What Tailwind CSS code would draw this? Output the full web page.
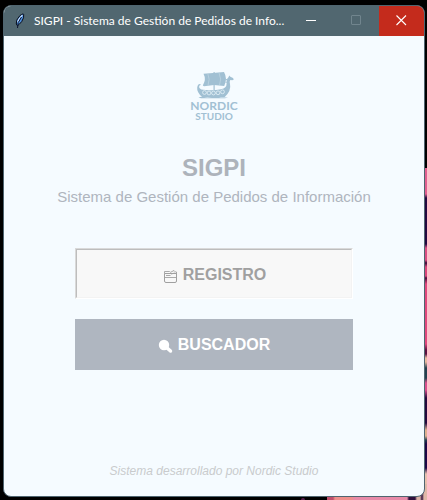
<!DOCTYPE html>
<html lang="es">
<head>
<meta charset="utf-8">
<meta name="viewport" content="width=device-width, initial-scale=1">
<title>SIGPI - Sistema de Gestión de Pedidos de Información</title>
<script src="https://cdn.jsdelivr.net/npm/@tailwindcss/browser@4"></script>
</head>
<body class="relative flex min-h-screen overflow-hidden bg-black pt-[5px] pr-[2px] pb-[3px] pl-[3px] font-['Liberation_Sans',Arial,sans-serif]">
<!-- Desktop wallpaper showing past the window's edges -->
<div aria-hidden="true" class="absolute right-0 bottom-0 h-[332px] w-4 bg-[linear-gradient(to_bottom,#e0608f_0_26px,#22083f_30px_76px,#d94f82_80px_92px,#3a0838_95px,#d9477a_99px_108px,#4a0a3c_110px,#e0487c_116px_176px,#5a1040_182px_186px,#e8b9a0_190px_194px,#24404f_200px_210px,#d9508c_215px_222px,#24083c_230px_255px,#e0b090_262px_268px,#24404f_272px,#1c0645_276px_300px,#e8bfae_306px_332px)]"></div>
<div aria-hidden="true" class="absolute right-0 bottom-0 h-4 w-[100px] bg-[linear-gradient(to_right,#c0506c_0_6px,#ee8f8c_8px_24px,#e78aa8_28px_80px,#30103c_82px_88px,#d9b0a4_90px_93px,#30103c_95px,#e0b8a8_97px)]"></div>
<div aria-hidden="true" class="absolute right-[122px] bottom-0 h-[2px] w-1 rounded-t bg-[#5a1f50]"></div>

<div class="relative flex min-w-0 flex-1 flex-col overflow-hidden rounded-lg border border-[#4f6570] bg-[#f5fbff]">
  <header class="flex h-[30px] shrink-0 items-stretch bg-[#516770] text-white">
    <div class="flex min-w-0 flex-1 items-center gap-1.5 pl-2">
      <svg class="h-4 w-4 shrink-0" viewBox="0 0 16 16" fill="none" aria-hidden="true">
        <path d="M11 .8 8 2.500 4.700 7.200 4.300 11 5.500 12.800 6.900 11.600 9.700 8.600 11.500 4.800 11.700 1.400Z" fill="#4d8fe0" stroke="#080c18" stroke-linejoin="round"/>
        <path d="M10.300 2.200 6.900 6.200 5.700 9.500" stroke="#cfe4ff" stroke-width="1.2"/>
        <path d="M9.500 4 6.200 9.600 5.500 15" stroke="#0c1630"/>
      </svg>
      <h1 class="whitespace-nowrap font-['Lato','Open_Sans',sans-serif] text-[12px] leading-4">SIGPI - Sistema de Gestión de Pedidos de Info...</h1>
    </div>
    <button type="button" aria-label="Minimizar" class="flex w-[45px] shrink-0 items-center justify-center">
      <svg class="h-3 w-3" viewBox="0 0 12 12" aria-hidden="true"><path d="M0 5.500h10" stroke="#fff"/></svg>
    </button>
    <button type="button" aria-label="Maximizar" disabled class="flex w-[45px] shrink-0 items-center justify-center">
      <svg class="h-3 w-3" viewBox="0 0 12 12" fill="none" aria-hidden="true"><rect x=".5" y=".5" width="9" height="9" rx=".5" stroke="#71858e"/></svg>
    </button>
    <button type="button" aria-label="Cerrar" class="flex w-[45px] shrink-0 items-center justify-center bg-[#c42b1c]">
      <svg class="h-3 w-3" viewBox="0 0 12 12" aria-hidden="true"><path d="M.5.500l9.500 9.500M10 .500l-9.500 9.500" stroke="#fff" stroke-width="1.1"/></svg>
    </button>
  </header>

  <main class="flex flex-1 flex-col items-center pt-9 pb-[17px] text-center">
    <svg class="h-[50px] w-[52px]" viewBox="0 0 52 50" role="img" aria-label="Nordic Studio" fill="#a1c0d3">
      <!-- Sail and mast -->
      <path d="M15.500 1.800 25 1 36 0Q39.800 6.500 36.200 14L26 13 16 14.200 14.800 13.400Q18.500 7.500 15.500 1.800Z"/>
      <path d="M19.800 1.600Q22.400 7 20 13.500M31 .8Q34 7 31.500 13.400" fill="none" stroke="#c6dae6" stroke-width=".6"/>
      <path d="M25.500 0h1.200v18h-1.200Z"/>
      <!-- Hull with curled stern and dragon head -->
      <path d="M12.300 13.300Q10.800 13.100 11.200 15.500 12 18 18 18 26 18.600 33 17.200 38.800 16 38.600 11.500 38.300 7 40.500 5.200L41.200 3.600 42.400 4.800 45 6 45.800 7.500 44.300 8.300 42.300 8Q41.200 9.500 42 12 43.600 18.500 36.500 25.300H14.500Q8.600 20.600 9.200 15.500 9.800 11.600 12.700 12.200Z"/>
      <path d="M39 8.500 37.400 7.400 39.300 6.800ZM38.700 11 37.200 10.500 38.600 9.400Z"/>
      <g stroke="#e5f1f8" stroke-width=".8"><circle cx="16.500" cy="20.500" r="1.900"/><circle cx="21" cy="21" r="1.900"/><circle cx="25.500" cy="21" r="1.900"/><circle cx="30" cy="20.800" r="1.900"/><circle cx="34.500" cy="19.800" r="1.900"/></g>
      <path d="M10.500 25.400Q13 24.200 16 25T24 25 31 25 40 25.400L37 26.200H13Z"/>
      <text x="26" y="38" text-anchor="middle" class="font-['Lato',sans-serif] text-[12px] font-bold">NORDIC</text>
      <text x="26" y="48" text-anchor="middle" class="font-['Lato',sans-serif] text-[10px] font-bold">STUDIO</text>
    </svg>

    <h2 class="mt-8 text-[24px] leading-7 font-bold text-[#adb3bb]">SIGPI</h2>
    <p class="mt-[5px] text-[15px] leading-5 whitespace-nowrap text-[#afb5be]">Sistema de Gestión de Pedidos de Información</p>

    <div class="mt-[41px] flex w-full flex-col gap-5 px-[71px]">
      <button type="button" class="h-[51px] border border-t-[#d9d9d9] border-r-white border-b-white border-l-[#d9d9d9] bg-[#f8f8f8] text-[16px] font-bold text-[#a0a0a0]">
        <span class="flex h-full items-center justify-center gap-[5px] border border-t-[#bdbdbd] border-r-[#f3f3f3] border-b-[#f3f3f3] border-l-[#bdbdbd] pt-[2px] pl-px">
          <svg class="mt-1 h-[15px] w-[15px]" viewBox="0 0 15 15" fill="none" stroke="currentColor" aria-hidden="true">
            <path d="M1.500 4.500h12v7.500q0 1.500-1.500 1.500H3Q1.500 13.500 1.500 12Z"/>
            <path d="M1.500 4.500V2.500h5l1 .8L11 1.500l1.500 1.500h1v2M3 6.500h4.500M8 5l4-1M2 8.500h11" stroke-width=".9"/>
          </svg>
          REGISTRO
        </span>
      </button>
      <button type="button" class="flex h-[51px] items-center justify-center gap-[5px] bg-[#afb6c0] text-[16px] font-bold text-white">
        <svg class="mt-1 h-[15px] w-[15px]" viewBox="0 0 15 15" aria-hidden="true">
          <circle cx="6" cy="6" r="5.200" fill="currentColor"/>
          <path d="M8.500 8.500 12.500 12" stroke="currentColor" stroke-width="3.500" stroke-linecap="round"/>
        </svg>
        BUSCADOR
      </button>
    </div>

    <p class="mt-auto text-[12px] leading-4 italic text-[#c9cbcd]">Sistema desarrollado por Nordic Studio</p>
  </main>
</div>
</body>
</html>
